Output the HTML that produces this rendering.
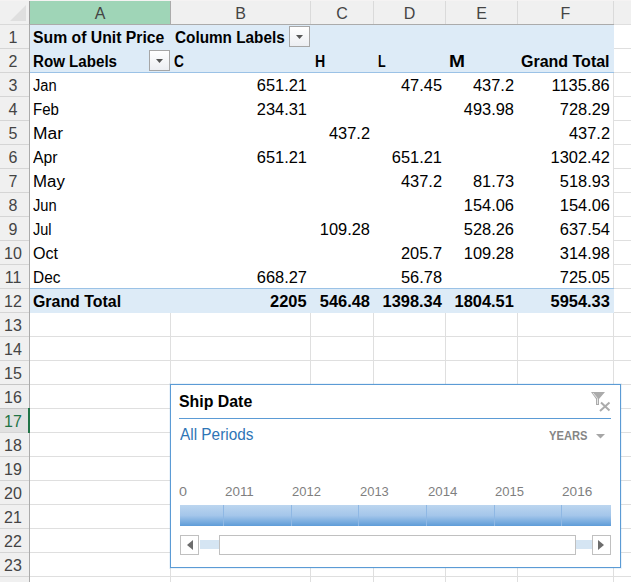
<!DOCTYPE html><html><head><meta charset="utf-8"><style>
*{margin:0;padding:0;box-sizing:border-box}
html,body{width:631px;height:582px;overflow:hidden;background:#fff;font-family:"Liberation Sans",sans-serif;position:relative}
.a{position:absolute}
.t{position:absolute;white-space:pre;font-size:16px;line-height:24px;height:24px;color:#000;transform-origin:0 0}
.b{font-weight:bold}
</style></head><body><div class="a" style="left:0;top:0;width:631px;height:1px;background:#f5f3f3"></div>
<div class="a" style="left:0;top:1px;width:631px;height:23px;background:#f0f0f0"></div>
<div class="a" style="left:0;top:24px;width:29px;height:1px;background:#d9d9d9"></div>
<div class="a" style="left:29px;top:24px;width:602px;height:1px;background:#ababab"></div>
<svg class="a" style="left:0;top:0" width="29" height="24"><polygon points="10,21 26,21 26,5" fill="#dfdfdf"/></svg>
<div class="a" style="left:30px;top:1px;width:140px;height:23px;background:#9fd5b7"></div>
<div class="a" style="left:170px;top:1px;width:1px;height:23px;background:#ababab"></div>
<div class="a" style="left:310px;top:1px;width:1px;height:23px;background:#dadada"></div>
<div class="a" style="left:373px;top:1px;width:1px;height:23px;background:#dadada"></div>
<div class="a" style="left:445px;top:1px;width:1px;height:23px;background:#dadada"></div>
<div class="a" style="left:517px;top:1px;width:1px;height:23px;background:#dadada"></div>
<div class="a" style="left:613px;top:1px;width:1px;height:23px;background:#dadada"></div>
<div class="a" style="left:29px;top:1px;width:1px;height:23px;background:#9e9e9e"></div>
<div class="a" style="left:0;top:25px;width:29px;height:557px;background:#f0f0f0"></div>
<div class="a" style="left:29px;top:25px;width:1px;height:557px;background:#ababab"></div>
<div class="a" style="left:0;top:409px;width:28px;height:23px;background:#e1e1e1"></div>
<div class="a" style="left:0;top:48px;width:29px;height:1px;background:#d5d5d5"></div>
<div class="a" style="left:0;top:72px;width:29px;height:1px;background:#d5d5d5"></div>
<div class="a" style="left:0;top:96px;width:29px;height:1px;background:#d5d5d5"></div>
<div class="a" style="left:0;top:120px;width:29px;height:1px;background:#d5d5d5"></div>
<div class="a" style="left:0;top:144px;width:29px;height:1px;background:#d5d5d5"></div>
<div class="a" style="left:0;top:168px;width:29px;height:1px;background:#d5d5d5"></div>
<div class="a" style="left:0;top:192px;width:29px;height:1px;background:#d5d5d5"></div>
<div class="a" style="left:0;top:216px;width:29px;height:1px;background:#d5d5d5"></div>
<div class="a" style="left:0;top:240px;width:29px;height:1px;background:#d5d5d5"></div>
<div class="a" style="left:0;top:264px;width:29px;height:1px;background:#d5d5d5"></div>
<div class="a" style="left:0;top:288px;width:29px;height:1px;background:#d5d5d5"></div>
<div class="a" style="left:0;top:312px;width:29px;height:1px;background:#d5d5d5"></div>
<div class="a" style="left:0;top:336px;width:29px;height:1px;background:#d5d5d5"></div>
<div class="a" style="left:0;top:360px;width:29px;height:1px;background:#d5d5d5"></div>
<div class="a" style="left:0;top:384px;width:29px;height:1px;background:#c6c6c6"></div>
<div class="a" style="left:0;top:408px;width:29px;height:1px;background:#c6c6c6"></div>
<div class="a" style="left:0;top:432px;width:29px;height:1px;background:#d5d5d5"></div>
<div class="a" style="left:0;top:456px;width:29px;height:1px;background:#d5d5d5"></div>
<div class="a" style="left:0;top:480px;width:29px;height:1px;background:#d5d5d5"></div>
<div class="a" style="left:0;top:504px;width:29px;height:1px;background:#d5d5d5"></div>
<div class="a" style="left:0;top:528px;width:29px;height:1px;background:#d5d5d5"></div>
<div class="a" style="left:0;top:552px;width:29px;height:1px;background:#d5d5d5"></div>
<div class="a" style="left:0;top:576px;width:29px;height:1px;background:#d5d5d5"></div>
<div class="a" style="left:28px;top:408px;width:2px;height:25px;background:#217346"></div>
<div class="a" style="left:30px;top:312px;width:601px;height:1px;background:#dfdfdf"></div>
<div class="a" style="left:30px;top:336px;width:601px;height:1px;background:#dfdfdf"></div>
<div class="a" style="left:30px;top:360px;width:601px;height:1px;background:#dfdfdf"></div>
<div class="a" style="left:30px;top:384px;width:601px;height:1px;background:#dfdfdf"></div>
<div class="a" style="left:30px;top:408px;width:601px;height:1px;background:#dfdfdf"></div>
<div class="a" style="left:30px;top:432px;width:601px;height:1px;background:#dfdfdf"></div>
<div class="a" style="left:30px;top:456px;width:601px;height:1px;background:#dfdfdf"></div>
<div class="a" style="left:30px;top:480px;width:601px;height:1px;background:#dfdfdf"></div>
<div class="a" style="left:30px;top:504px;width:601px;height:1px;background:#dfdfdf"></div>
<div class="a" style="left:30px;top:528px;width:601px;height:1px;background:#dfdfdf"></div>
<div class="a" style="left:30px;top:552px;width:601px;height:1px;background:#dfdfdf"></div>
<div class="a" style="left:30px;top:576px;width:601px;height:1px;background:#dfdfdf"></div>
<div class="a" style="left:170px;top:313px;width:1px;height:269px;background:#dfdfdf"></div>
<div class="a" style="left:310px;top:313px;width:1px;height:269px;background:#dfdfdf"></div>
<div class="a" style="left:373px;top:313px;width:1px;height:269px;background:#dfdfdf"></div>
<div class="a" style="left:445px;top:313px;width:1px;height:269px;background:#dfdfdf"></div>
<div class="a" style="left:517px;top:313px;width:1px;height:269px;background:#dfdfdf"></div>
<div class="a" style="left:613px;top:313px;width:1px;height:269px;background:#dfdfdf"></div>
<div class="a" style="left:614px;top:24px;width:17px;height:1px;background:#dfdfdf"></div>
<div class="a" style="left:614px;top:48px;width:17px;height:1px;background:#dfdfdf"></div>
<div class="a" style="left:614px;top:72px;width:17px;height:1px;background:#dfdfdf"></div>
<div class="a" style="left:614px;top:96px;width:17px;height:1px;background:#dfdfdf"></div>
<div class="a" style="left:614px;top:120px;width:17px;height:1px;background:#dfdfdf"></div>
<div class="a" style="left:614px;top:144px;width:17px;height:1px;background:#dfdfdf"></div>
<div class="a" style="left:614px;top:168px;width:17px;height:1px;background:#dfdfdf"></div>
<div class="a" style="left:614px;top:192px;width:17px;height:1px;background:#dfdfdf"></div>
<div class="a" style="left:614px;top:216px;width:17px;height:1px;background:#dfdfdf"></div>
<div class="a" style="left:614px;top:240px;width:17px;height:1px;background:#dfdfdf"></div>
<div class="a" style="left:614px;top:264px;width:17px;height:1px;background:#dfdfdf"></div>
<div class="a" style="left:614px;top:288px;width:17px;height:1px;background:#dfdfdf"></div>
<div class="a" style="left:613px;top:73px;width:1px;height:216px;background:#dfdfdf"></div>
<div class="a" style="left:30px;top:25px;width:584px;height:47px;background:#ddebf7"></div>
<div class="a" style="left:30px;top:72px;width:584px;height:1px;background:#9bc2e6"></div>
<div class="a" style="left:30px;top:288px;width:584px;height:1px;background:#9bc2e6"></div>
<div class="a" style="left:30px;top:289px;width:584px;height:24px;background:#ddebf7"></div>
<div class="a" style="left:289px;top:26px;width:21px;height:21px;border:1px solid #a6a6a6;background:linear-gradient(#fff,#eceef2)"></div>
<svg class="a" style="left:289px;top:26px" width="21" height="21"><polygon points="7,9 14,9 10.5,13" fill="#555"/></svg>
<div class="a" style="left:149px;top:50px;width:21px;height:21px;border:1px solid #a6a6a6;background:linear-gradient(#fff,#eceef2)"></div>
<svg class="a" style="left:149px;top:50px" width="21" height="21"><polygon points="7,9 14,9 10.5,13" fill="#555"/></svg>
<div class="a" style="left:170px;top:384px;width:451px;height:184px;border:1px solid #5b9bd5;background:#fff;box-shadow:0 0 0 1px rgba(91,155,213,0.12)"></div>
<div class="a" style="left:179px;top:418px;width:432px;height:1px;background:#5b9bd5"></div>
<svg class="a" style="left:596px;top:434px" width="9" height="5"><polygon points="0,0 9,0 4.5,4.5" fill="#a6a6a6"/></svg>
<svg class="a" style="left:585px;top:386px" width="30" height="30"><polygon points="6,6 20,6 14,13 14,19 11,19 11,13" fill="#ababab"/><path d="M8,7 L12.5,12.5 L12.5,18" stroke="#e6e6e6" stroke-width="1" fill="none"/><path d="M16,16.5 L24.5,24.5 M24.5,16.5 L15,25" stroke="#ababab" stroke-width="2"/></svg>
<div class="a" style="left:180px;top:505px;width:431px;height:21px;background:linear-gradient(#bcd6ef,#a4c6ea 50%,#5e9cd8)"></div>
<div class="a" style="left:223px;top:505px;width:1px;height:21px;background:#8fb8e4"></div>
<div class="a" style="left:291px;top:505px;width:1px;height:21px;background:#8fb8e4"></div>
<div class="a" style="left:358px;top:505px;width:1px;height:21px;background:#8fb8e4"></div>
<div class="a" style="left:426px;top:505px;width:1px;height:21px;background:#8fb8e4"></div>
<div class="a" style="left:494px;top:505px;width:1px;height:21px;background:#8fb8e4"></div>
<div class="a" style="left:561px;top:505px;width:1px;height:21px;background:#8fb8e4"></div>
<div class="a" style="left:180px;top:535px;width:19px;height:20px;border:1px solid #c0c0c0;background:#fff"></div>
<svg class="a" style="left:180px;top:535px" width="19" height="20"><polygon points="7,10 13,5 13,15" fill="#6d6d6d"/></svg>
<div class="a" style="left:200px;top:540px;width:19px;height:9px;background:#d5e5f3"></div>
<div class="a" style="left:219px;top:535px;width:357px;height:20px;border:1px solid #c0c0c0;background:#fff"></div>
<div class="a" style="left:576px;top:540px;width:16px;height:9px;background:#d5e5f3"></div>
<div class="a" style="left:592px;top:535px;width:19px;height:20px;border:1px solid #c0c0c0;background:#fff"></div>
<svg class="a" style="left:592px;top:535px" width="19" height="20"><polygon points="6,5 6,15 12,10" fill="#6d6d6d"/></svg>
<div id="colA" class="t" style="top:2px;left:30px;width:140px;text-align:center;color:#444">A</div>
<div id="colB" class="t" style="top:2px;left:171px;width:139px;text-align:center;color:#444">B</div>
<div id="colC" class="t" style="top:2px;left:311px;width:62px;text-align:center;color:#444">C</div>
<div id="colD" class="t" style="top:2px;left:374px;width:71px;text-align:center;color:#444">D</div>
<div id="colE" class="t" style="top:2px;left:446px;width:71px;text-align:center;color:#444">E</div>
<div id="colF" class="t" style="top:2px;left:518px;width:95px;text-align:center;color:#444">F</div>
<div id="row1" class="t" style="top:26px;left:0px;width:26px;text-align:center;color:#444">1</div>
<div id="row2" class="t" style="top:50px;left:0px;width:26px;text-align:center;color:#444">2</div>
<div id="row3" class="t" style="top:74px;left:0px;width:26px;text-align:center;color:#444">3</div>
<div id="row4" class="t" style="top:98px;left:0px;width:26px;text-align:center;color:#444">4</div>
<div id="row5" class="t" style="top:122px;left:0px;width:26px;text-align:center;color:#444">5</div>
<div id="row6" class="t" style="top:146px;left:0px;width:26px;text-align:center;color:#444">6</div>
<div id="row7" class="t" style="top:170px;left:0px;width:26px;text-align:center;color:#444">7</div>
<div id="row8" class="t" style="top:194px;left:0px;width:26px;text-align:center;color:#444">8</div>
<div id="row9" class="t" style="top:218px;left:0px;width:26px;text-align:center;color:#444">9</div>
<div id="row10" class="t" style="top:242px;left:0px;width:26px;text-align:center;color:#444">10</div>
<div id="row11" class="t" style="top:266px;left:0px;width:26px;text-align:center;color:#444">11</div>
<div id="row12" class="t" style="top:290px;left:0px;width:26px;text-align:center;color:#444">12</div>
<div id="row13" class="t" style="top:314px;left:0px;width:26px;text-align:center;color:#444">13</div>
<div id="row14" class="t" style="top:338px;left:0px;width:26px;text-align:center;color:#444">14</div>
<div id="row15" class="t" style="top:362px;left:0px;width:26px;text-align:center;color:#444">15</div>
<div id="row16" class="t" style="top:386px;left:0px;width:26px;text-align:center;color:#444">16</div>
<div id="row17" class="t" style="top:410px;left:0px;width:26px;text-align:center;color:#217346">17</div>
<div id="row18" class="t" style="top:434px;left:0px;width:26px;text-align:center;color:#444">18</div>
<div id="row19" class="t" style="top:458px;left:0px;width:26px;text-align:center;color:#444">19</div>
<div id="row20" class="t" style="top:482px;left:0px;width:26px;text-align:center;color:#444">20</div>
<div id="row21" class="t" style="top:506px;left:0px;width:26px;text-align:center;color:#444">21</div>
<div id="row22" class="t" style="top:530px;left:0px;width:26px;text-align:center;color:#444">22</div>
<div id="row23" class="t" style="top:554px;left:0px;width:26px;text-align:center;color:#444">23</div>
<div id="row24" class="t" style="top:578px;left:0px;width:26px;text-align:center;color:#444">24</div>
<div id="sum" class="t b" style="top:26px;left:33.17px;transform:scaleX(0.9851);">Sum of Unit Price</div>
<div id="collab" class="t b" style="top:26px;left:174.85px;transform:scaleX(0.9566);">Column Labels</div>
<div id="rowlab" class="t b" style="top:50px;left:33.43px;transform:scaleX(0.9449);">Row Labels</div>
<div id="hC" class="t b" style="top:50px;left:174.32px;transform:scaleX(0.8538);">C</div>
<div id="hH" class="t b" style="top:50px;left:314.52px;transform:scaleX(0.8840);">H</div>
<div id="hL" class="t b" style="top:50px;left:377.50px;transform:scaleX(0.7849);">L</div>
<div id="hM" class="t b" style="top:50px;left:448.84px;transform:scaleX(1.1963);">M</div>
<div id="hGT" class="t b" style="top:50px;left:521.25px;transform:scaleX(0.9996);">Grand Total</div>
<div id="mJan" class="t" style="top:74px;left:33.43px;transform:scaleX(0.9172);">Jan</div>
<div id="v3_1" class="t" style="top:74px;right:324px;transform-origin:100% 0;transform:scaleX(1.025);">651.21</div>
<div id="v3_3" class="t" style="top:74px;right:189px;transform-origin:100% 0;transform:scaleX(1.025);">47.45</div>
<div id="v3_4" class="t" style="top:74px;right:117px;transform-origin:100% 0;transform:scaleX(1.025);">437.2</div>
<div id="v3_5" class="t" style="top:74px;right:21px;transform-origin:100% 0;transform:scaleX(1.025);">1135.86</div>
<div id="mFeb" class="t" style="top:98px;left:33.49px;transform:scaleX(0.9374);">Feb</div>
<div id="v4_1" class="t" style="top:98px;right:324px;transform-origin:100% 0;transform:scaleX(1.025);">234.31</div>
<div id="v4_4" class="t" style="top:98px;right:117px;transform-origin:100% 0;transform:scaleX(1.025);">493.98</div>
<div id="v4_5" class="t" style="top:98px;right:21px;transform-origin:100% 0;transform:scaleX(1.025);">728.29</div>
<div id="mMar" class="t" style="top:122px;left:33.12px;transform:scaleX(1.0862);">Mar</div>
<div id="v5_2" class="t" style="top:122px;right:261px;transform-origin:100% 0;transform:scaleX(1.025);">437.2</div>
<div id="v5_5" class="t" style="top:122px;right:21px;transform-origin:100% 0;transform:scaleX(1.025);">437.2</div>
<div id="mApr" class="t" style="top:146px;left:33.34px;transform:scaleX(0.9847);">Apr</div>
<div id="v6_1" class="t" style="top:146px;right:324px;transform-origin:100% 0;transform:scaleX(1.025);">651.21</div>
<div id="v6_3" class="t" style="top:146px;right:189px;transform-origin:100% 0;transform:scaleX(1.025);">651.21</div>
<div id="v6_5" class="t" style="top:146px;right:21px;transform-origin:100% 0;transform:scaleX(1.025);">1302.42</div>
<div id="mMay" class="t" style="top:170px;left:33.20px;transform:scaleX(1.0518);">May</div>
<div id="v7_3" class="t" style="top:170px;right:189px;transform-origin:100% 0;transform:scaleX(1.025);">437.2</div>
<div id="v7_4" class="t" style="top:170px;right:117px;transform-origin:100% 0;transform:scaleX(1.025);">81.73</div>
<div id="v7_5" class="t" style="top:170px;right:21px;transform-origin:100% 0;transform:scaleX(1.025);">518.93</div>
<div id="mJun" class="t" style="top:194px;left:33.43px;transform:scaleX(0.9172);">Jun</div>
<div id="v8_4" class="t" style="top:194px;right:117px;transform-origin:100% 0;transform:scaleX(1.025);">154.06</div>
<div id="v8_5" class="t" style="top:194px;right:21px;transform-origin:100% 0;transform:scaleX(1.025);">154.06</div>
<div id="mJul" class="t" style="top:218px;left:33.07px;transform:scaleX(0.9039);">Jul</div>
<div id="v9_2" class="t" style="top:218px;right:261px;transform-origin:100% 0;transform:scaleX(1.025);">109.28</div>
<div id="v9_4" class="t" style="top:218px;right:117px;transform-origin:100% 0;transform:scaleX(1.025);">528.26</div>
<div id="v9_5" class="t" style="top:218px;right:21px;transform-origin:100% 0;transform:scaleX(1.025);">637.54</div>
<div id="mOct" class="t" style="top:242px;left:32.96px;transform:scaleX(1.0063);">Oct</div>
<div id="v10_3" class="t" style="top:242px;right:189px;transform-origin:100% 0;transform:scaleX(1.025);">205.7</div>
<div id="v10_4" class="t" style="top:242px;right:117px;transform-origin:100% 0;transform:scaleX(1.025);">109.28</div>
<div id="v10_5" class="t" style="top:242px;right:21px;transform-origin:100% 0;transform:scaleX(1.025);">314.98</div>
<div id="mDec" class="t" style="top:266px;left:33.05px;transform:scaleX(0.9629);">Dec</div>
<div id="v11_1" class="t" style="top:266px;right:324px;transform-origin:100% 0;transform:scaleX(1.025);">668.27</div>
<div id="v11_3" class="t" style="top:266px;right:189px;transform-origin:100% 0;transform:scaleX(1.025);">56.78</div>
<div id="v11_5" class="t" style="top:266px;right:21px;transform-origin:100% 0;transform:scaleX(1.025);">725.05</div>
<div id="gt" class="t b" style="top:290px;left:33.06px;transform:scaleX(0.9941);">Grand Total</div>
<div id="v12_1" class="t b" style="top:290px;right:324px;transform-origin:100% 0;transform:scaleX(1.025);">2205</div>
<div id="v12_2" class="t b" style="top:290px;right:261px;transform-origin:100% 0;transform:scaleX(1.025);">546.48</div>
<div id="v12_3" class="t b" style="top:290px;right:189px;transform-origin:100% 0;transform:scaleX(1.025);">1398.34</div>
<div id="v12_4" class="t b" style="top:290px;right:117px;transform-origin:100% 0;transform:scaleX(1.025);">1804.51</div>
<div id="v12_5" class="t b" style="top:290px;right:21px;transform-origin:100% 0;transform:scaleX(1.025);">5954.33</div>
<div id="ship" class="t b" style="top:390px;left:178.96px;transform:scaleX(0.9925);">Ship Date</div>
<div id="allp" class="t" style="top:423px;left:180.19px;transform:scaleX(0.9603);color:#2e75b6">All Periods</div>
<div id="years" class="t b" style="top:424px;left:549.08px;transform:scaleX(0.8598);color:#858585;font-size:13px">YEARS</div>
<div id="y0" class="t" style="top:480px;left:178.62px;transform:scaleX(1.1035);color:#7f7f7f;font-size:13px">0</div>
<div id="y2011" class="t" style="top:480px;left:224.94px;transform:scaleX(1.0312);color:#7f7f7f;font-size:13px">2011</div>
<div id="y2012" class="t" style="top:480px;left:291.56px;transform:scaleX(1.0010);color:#7f7f7f;font-size:13px">2012</div>
<div id="y2013" class="t" style="top:480px;left:359.78px;transform:scaleX(0.9967);color:#7f7f7f;font-size:13px">2013</div>
<div id="y2014" class="t" style="top:480px;left:427.55px;transform:scaleX(1.0155);color:#7f7f7f;font-size:13px">2014</div>
<div id="y2015" class="t" style="top:480px;left:494.56px;transform:scaleX(1.0028);color:#7f7f7f;font-size:13px">2015</div>
<div id="y2016" class="t" style="top:480px;left:562.32px;transform:scaleX(1.0480);color:#7f7f7f;font-size:13px">2016</div></body></html>
